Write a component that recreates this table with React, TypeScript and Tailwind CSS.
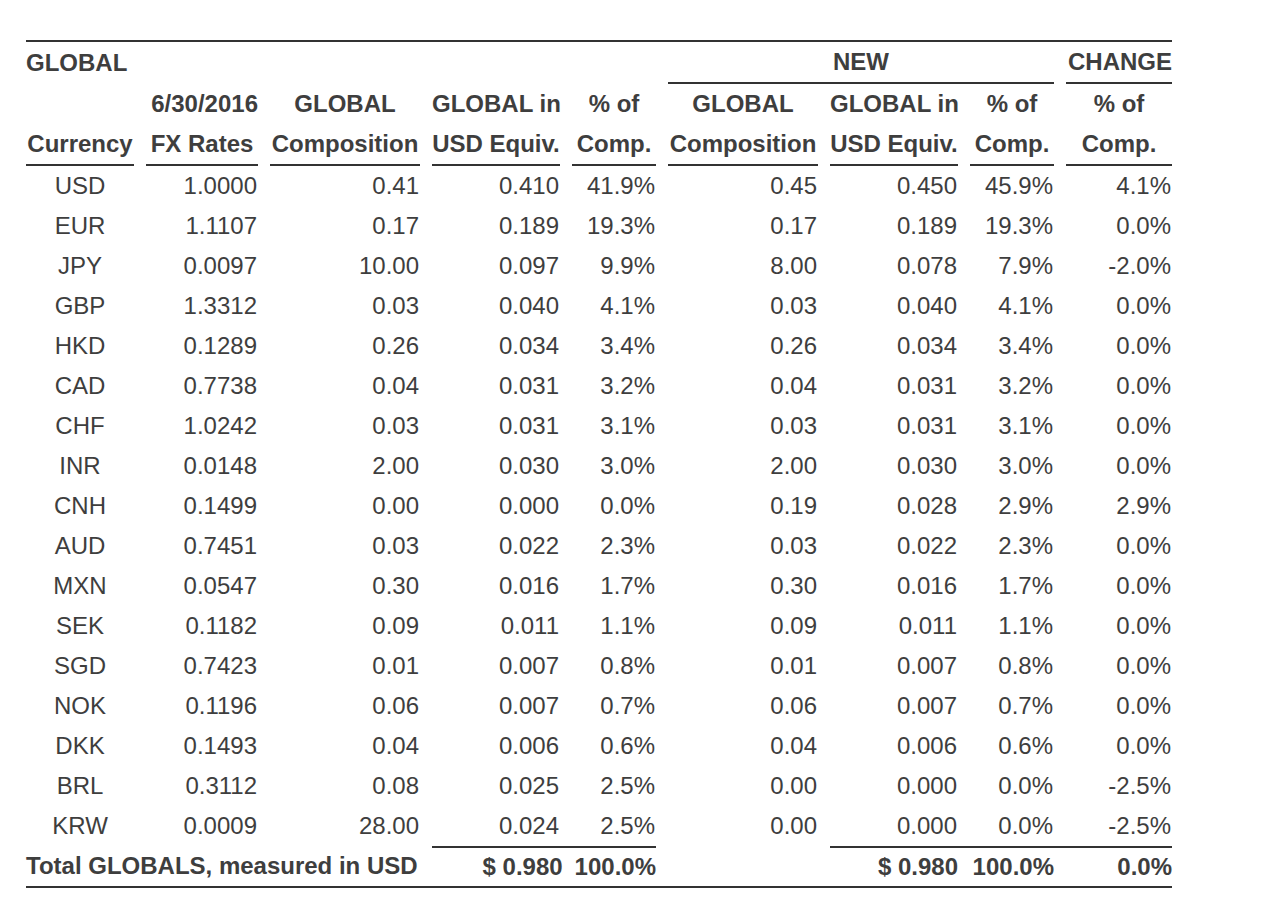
const rows: string[][] = [
  ['USD', '1.0000', '0.41', '0.410', '41.9%', '0.45', '0.450', '45.9%', '4.1%'],
  ['EUR', '1.1107', '0.17', '0.189', '19.3%', '0.17', '0.189', '19.3%', '0.0%'],
  ['JPY', '0.0097', '10.00', '0.097', '9.9%', '8.00', '0.078', '7.9%', '-2.0%'],
  ['GBP', '1.3312', '0.03', '0.040', '4.1%', '0.03', '0.040', '4.1%', '0.0%'],
  ['HKD', '0.1289', '0.26', '0.034', '3.4%', '0.26', '0.034', '3.4%', '0.0%'],
  ['CAD', '0.7738', '0.04', '0.031', '3.2%', '0.04', '0.031', '3.2%', '0.0%'],
  ['CHF', '1.0242', '0.03', '0.031', '3.1%', '0.03', '0.031', '3.1%', '0.0%'],
  ['INR', '0.0148', '2.00', '0.030', '3.0%', '2.00', '0.030', '3.0%', '0.0%'],
  ['CNH', '0.1499', '0.00', '0.000', '0.0%', '0.19', '0.028', '2.9%', '2.9%'],
  ['AUD', '0.7451', '0.03', '0.022', '2.3%', '0.03', '0.022', '2.3%', '0.0%'],
  ['MXN', '0.0547', '0.30', '0.016', '1.7%', '0.30', '0.016', '1.7%', '0.0%'],
  ['SEK', '0.1182', '0.09', '0.011', '1.1%', '0.09', '0.011', '1.1%', '0.0%'],
  ['SGD', '0.7423', '0.01', '0.007', '0.8%', '0.01', '0.007', '0.8%', '0.0%'],
  ['NOK', '0.1196', '0.06', '0.007', '0.7%', '0.06', '0.007', '0.7%', '0.0%'],
  ['DKK', '0.1493', '0.04', '0.006', '0.6%', '0.04', '0.006', '0.6%', '0.0%'],
  ['BRL', '0.3112', '0.08', '0.025', '2.5%', '0.00', '0.000', '0.0%', '-2.5%'],
  ['KRW', '0.0009', '28.00', '0.024', '2.5%', '0.00', '0.000', '0.0%', '-2.5%'],
]

// column widths in px, gap of 12px between columns
const cols = 'grid grid-cols-[108px_112px_150px_128px_84px_150px_128px_84px_106px] gap-x-[12px]'

const line = 'border-b-2 border-[#333]'

export default function App() {
  return (
    <div
      className="min-h-[902px] bg-white pt-[40px] pl-[26px] text-[24px] leading-none text-[#3e3e3e]"
      style={{ fontFamily: '"Liberation Sans", Arial, sans-serif' }}
    >
      <div className="w-[1146px] border-t-2 border-[#333]">
        {/* header row 1 */}
        <div className={`${cols} h-[42px] font-bold`}>
          <div className="col-span-5 flex items-center">GLOBAL</div>
          <div className={`col-span-3 flex items-center justify-center ${line}`}>NEW</div>
          <div className={`flex items-center justify-end ${line}`}>CHANGE</div>
        </div>

        {/* header row 2 */}
        <div className={`${cols} h-[40px] font-bold items-center whitespace-nowrap`}>
          <div></div>
          <div className="text-right">6/30/2016</div>
          <div className="text-center">GLOBAL</div>
          <div className="text-center">GLOBAL in</div>
          <div className="text-center">% of</div>
          <div className="text-center">GLOBAL</div>
          <div className="text-center">GLOBAL in</div>
          <div className="text-center">% of</div>
          <div className="text-center">% of</div>
        </div>

        {/* header row 3 */}
        <div className={`${cols} h-[42px] font-bold`}>
          {['Currency', 'FX Rates', 'Composition', 'USD Equiv.', 'Comp.', 'Composition', 'USD Equiv.', 'Comp.', 'Comp.'].map(
            (h, i) => (
              <div key={i} className={`flex items-center justify-center whitespace-nowrap ${line}`}>
                {h}
              </div>
            ),
          )}
        </div>

        {/* data */}
        {rows.map((r) => (
          <div key={r[0]} className={`${cols} h-[40px] items-center`}>
            <div className="text-center">{r[0]}</div>
            {r.slice(1).map((v, i) => (
              <div key={i} className="text-right pr-[1px]">
                {v}
              </div>
            ))}
          </div>
        ))}

        {/* total */}
        <div className={`${cols} h-[42px] font-bold border-b-2 border-[#333]`}>
          <div className="col-span-3 flex items-center whitespace-nowrap">Total GLOBALS, measured in USD</div>
          <div className="col-span-2 flex items-center justify-end gap-[12px] border-t-2 border-[#333]">
            <span>$ 0.980</span>
            <span>100.0%</span>
          </div>
          <div></div>
          <div className="col-span-3 flex items-center border-t-2 border-[#333]">
            <span className="flex-1 text-right">$ 0.980</span>
            <span className="w-[96px] text-right">100.0%</span>
            <span className="w-[118px] text-right">0.0%</span>
          </div>
        </div>
      </div>
    </div>
  )
}
